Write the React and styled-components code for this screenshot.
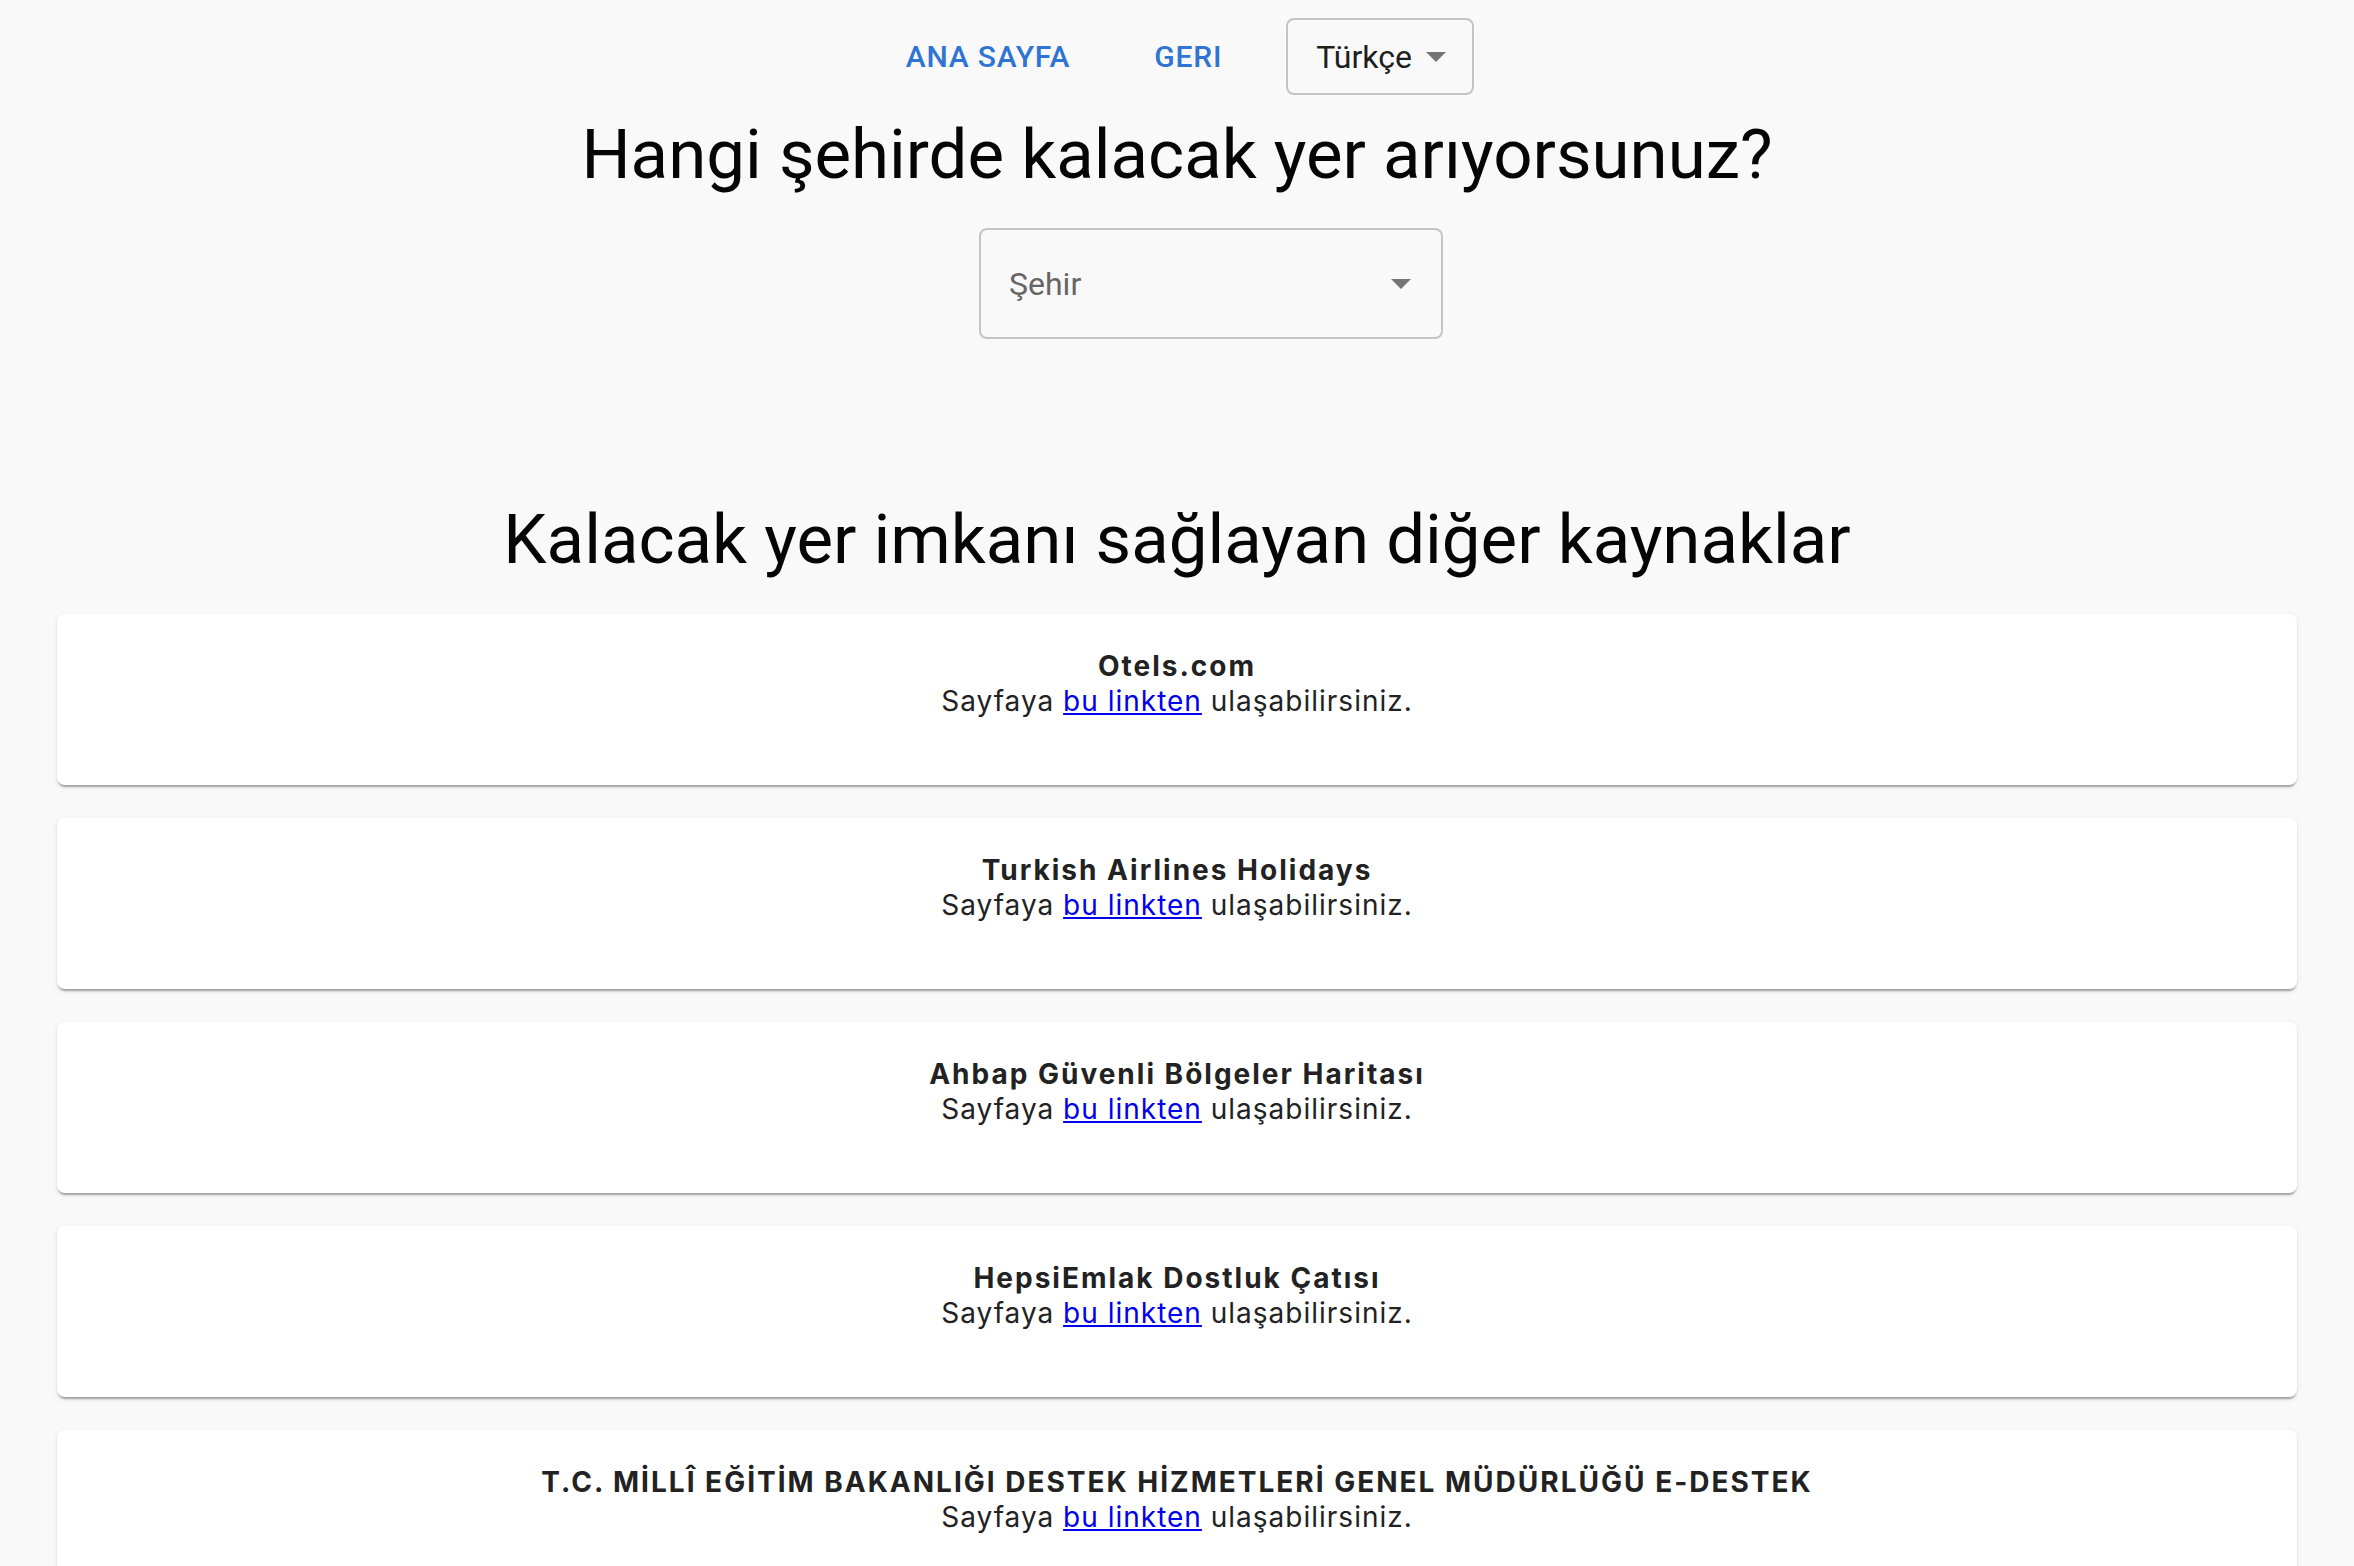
import * as React from 'react';
import styled, { createGlobalStyle } from 'styled-components';

const GlobalStyle = createGlobalStyle`
  html, body {
    margin: 0;
    padding: 0;
    background-color: #f9f9f9;
  }
  body {
    font-family: Roboto, "Liberation Sans", sans-serif;
  }
`;

const Page = styled.div`
  display: flex;
  flex-direction: column;
  align-items: center;
  padding-top: 18px;
`;

const NavBar = styled.nav`
  display: flex;
  align-items: center;
  padding-left: 10px;
`;

const NavButton = styled.a`
  min-width: 128px;
  margin-right: ${({ $gap }) => $gap}px;
  padding: 12px 16px;
  box-sizing: border-box;
  text-align: center;
  font-family: Roboto, sans-serif;
  font-weight: 500;
  font-size: 30px;
  letter-spacing: 0.8px;
  text-transform: uppercase;
  color: #2f74d2;
  text-decoration: none;
  cursor: pointer;
`;

const SelectBox = styled.div`
  display: flex;
  align-items: center;
  justify-content: space-between;
  box-sizing: border-box;
  width: ${({ $width }) => $width}px;
  height: ${({ $height }) => $height}px;
  margin-left: ${({ $offset }) => $offset || 0}px;
  padding: 0 ${({ $pr }) => $pr}px 0 28px;
  border: 2px solid #c4c4c4;
  border-radius: 8px;
  font-family: Roboto, sans-serif;
  font-size: 32px;
  color: ${({ $muted }) => ($muted ? '#666666' : '#1e1e1e')};
`;

const Caret = () => (
  <svg width="20" height="10" viewBox="0 0 20 10">
    <path d="M0 0 L20 0 L10 10 Z" fill="#757575" />
  </svg>
);

const Heading = styled.h1`
  margin: ${({ $mt }) => $mt}px 0 ${({ $mb }) => $mb}px;
  font-family: Roboto, sans-serif;
  font-weight: 400;
  font-size: 69px;
  line-height: 84px;
  color: #050505;
  text-align: center;
`;

const CardList = styled.div`
  align-self: stretch;
  display: flex;
  flex-direction: column;
  gap: 33px;
  padding: 0 57px;
`;

const Card = styled.div`
  box-sizing: border-box;
  height: 171px;
  padding-top: 35px;
  background: #ffffff;
  border-radius: 8px;
  box-shadow: 0 4px 2px -2px rgba(0, 0, 0, 0.22), 0 2px 2px 0 rgba(0, 0, 0, 0.12),
    0 2px 6px 0 rgba(0, 0, 0, 0.08);
  text-align: center;
  font-family: Inter, "Noto Sans", sans-serif;
  font-size: 28px;
  line-height: 35px;
  letter-spacing: 1px;
  color: #222222;
`;

const CardTitle = styled.div`
  font-weight: 700;
  letter-spacing: 2px;
`;

const CardLink = styled.a`
  color: #0000ee;
  text-decoration: underline;
`;

const resources = [
  'Otels.com',
  'Turkish Airlines Holidays',
  'Ahbap Güvenli Bölgeler Haritası',
  'HepsiEmlak Dostluk Çatısı',
  'T.C. MİLLÎ EĞİTİM BAKANLIĞI DESTEK HİZMETLERİ GENEL MÜDÜRLÜĞÜ E-DESTEK',
];

const App = () => {
  return (
    <>
      <GlobalStyle />
      <Page>
        <NavBar>
          <NavButton $gap={38}>Ana Sayfa</NavButton>
          <NavButton $gap={34}>Geri</NavButton>
          <SelectBox $width={188} $height={77} $pr={26}>
            Türkçe
            <Caret />
          </SelectBox>
        </NavBar>
        <Heading $mt={18} $mb={31}>Hangi şehirde kalacak yer arıyorsunuz?</Heading>
        <SelectBox $width={464} $height={111} $pr={30} $offset={68} $muted>
          Şehir
          <Caret />
        </SelectBox>
        <Heading $mt={159} $mb={32}>Kalacak yer imkanı sağlayan diğer kaynaklar</Heading>
        <CardList>
          {resources.map((name) => (
            <Card key={name}>
              <CardTitle>{name}</CardTitle>
              <div>
                Sayfaya <CardLink href="#">bu linkten</CardLink> ulaşabilirsiniz.
              </div>
            </Card>
          ))}
        </CardList>
      </Page>
    </>
  );
};

export default App;
